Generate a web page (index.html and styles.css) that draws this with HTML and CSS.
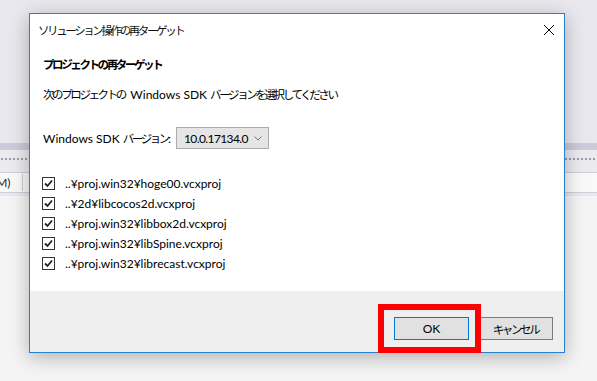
FILE: index.html
```html
<!DOCTYPE html>
<html lang="ja">
<head>
  <meta charset="UTF-8">
  <title>ソリューション操作の再ターゲット</title>
  <link rel="stylesheet" href="styles.css">
</head>
<body>
  <!-- IDE behind the dialog -->
  <div class="ide">
    <div class="ide-top"></div>
    <div class="ide-band"></div>
    <div class="ide-grip"></div>
    <div class="ide-bar">
      <span class="ide-menu">(M)</span>
      <span class="ide-sep"></span>
    </div>
    <div class="ide-under"></div>
    <div class="ide-rest"></div>
  </div>

  <div class="dialog">
    <div class="titlebar">
      <span class="title ja">ソリューション操作の再ターゲット</span>
      <svg class="close" width="12" height="12" viewBox="0 0 12 12">
        <path d="M1 1 L11 11 M11 1 L1 11" stroke="#000" stroke-width="1"/>
      </svg>
    </div>

    <div class="content">
      <h2 class="heading ja">プロジェクトの再ターゲット</h2>
      <p class="lead"><span class="ja">次のプロジェクトの</span> Windows SDK <span class="ja">バージョンを選択してください</span></p>

      <div class="sdk-row">
        <span class="sdk-label">Windows SDK <span class="ja">バージョン</span>:</span>
        <div class="select">
          <span class="value">10.0.17134.0</span>
          <svg class="chev" width="8" height="5" viewBox="0 0 8 5">
            <path d="M0.5 0.5 L4 4 L7.5 0.5" fill="none" stroke="#777" stroke-width="1"/>
          </svg>
        </div>
      </div>

      <ul class="projects">
        <li><span class="check"></span>..¥proj.win32¥hoge00.vcxproj</li>
        <li><span class="check"></span>..¥2d¥libcocos2d.vcxproj</li>
        <li><span class="check"></span>..¥proj.win32¥libbox2d.vcxproj</li>
        <li><span class="check"></span>..¥proj.win32¥libSpine.vcxproj</li>
        <li><span class="check"></span>..¥proj.win32¥librecast.vcxproj</li>
      </ul>
    </div>

    <div class="footer">
      <button class="btn btn-ok">OK</button>
      <button class="btn"><span class="ja">キャンセル</span></button>
    </div>
  </div>

  <div class="highlight"></div>
</body>
</html>
```

FILE: styles.css
```css
body {
  margin: 0;
  width: 597px;
  height: 381px;
  overflow: hidden;
  font-family: Lato, "Noto Sans CJK JP", sans-serif;
  font-size: 12px;
  color: #000;
  background-color: #f4f4f4;
  position: relative;
}

/* japanese runs: Yu Gothic UI kana are narrow, squeeze Noto a bit */
.ja {
  font-family: "Noto Sans CJK JP", sans-serif;
  font-size: 11.5px;
  letter-spacing: -2.4px;
}

.lead .ja:first-child {
  margin-right: 2.4px;
}

/* background IDE */
.ide-top {
  height: 143px;
  background: #e8e8ee;
}

.ide-band {
  height: 7px;
  background: #cbcbd9;
}

.ide-grip {
  height: 23px;
  background-color: #eaeaef;
  background-image: radial-gradient(#9a9aa6 0.8px, transparent 1px);
  background-size: 4px 4px;
  background-position: 0 7px;
  background-repeat: repeat-x;
  border-bottom: 1px solid #cfcfd8;
  box-sizing: border-box;
}

.ide-bar {
  height: 19px;
  background: #f9f9f9;
  border-bottom: 1px solid #cfcfd8;
  display: flex;
  align-items: center;
  color: #1e1e1e;
}

.ide-menu {
  margin-left: -7px;
}

.ide-sep {
  width: 1px;
  height: 17px;
  background: #ccc;
  margin-left: 11px;
}

.ide-under {
  height: 3px;
  background: #e8e8ee;
}

.ide-rest {
  height: 190px;
  background: #f4f4f4;
}

/* dialog window */
.dialog {
  position: absolute;
  left: 29px;
  top: 13px;
  width: 534px;
  border: 1px solid #2b7fd0;
  background: #fff;
  box-shadow: 0 4px 18px rgba(0, 0, 0, 0.28);
}

.titlebar {
  height: 31px;
  display: flex;
  align-items: center;
  justify-content: space-between;
  padding: 0 9px 0 8px;
}

.title {
  color: #111;
}

.content {
  padding: 11px 13px 18px;
}

.heading {
  margin: 0;
  font-weight: bold;
  line-height: 16px;
}

.lead {
  margin: 14px 0 0;
  line-height: 16px;
}

.sdk-row {
  margin-top: 24px;
  display: flex;
  align-items: center;
  gap: 5px;
}

.select {
  width: 78px;
  height: 20px;
  border: 1px solid #acacac;
  background: #e5e5e5;
  display: flex;
  align-items: center;
  justify-content: space-between;
  padding: 0 6px 0 7px;
}

.value {
  letter-spacing: -0.6px;
}

.chev {
  margin-top: 1px;
}

.projects {
  list-style: none;
  margin: 24px 0 0;
  padding: 0;
}

.projects li {
  height: 20px;
  display: flex;
  align-items: center;
}

.check {
  width: 11px;
  height: 11px;
  border: 1px solid #333;
  margin: 0 10px 0 -1px;
  background: #fff url("data:image/svg+xml;utf8,<svg xmlns='http://www.w3.org/2000/svg' width='11' height='11'><path d='M2 5.5 L4.5 8 L9 2.5' fill='none' stroke='%23222' stroke-width='1.8'/></svg>") no-repeat center;
}

.footer {
  height: 61px;
  background: #efefef;
  display: flex;
  justify-content: flex-end;
  align-items: flex-start;
  gap: 9px;
  padding: 26px 11px 0 0;
  box-sizing: border-box;
}

.btn {
  width: 75px;
  height: 23px;
  background: #e1e1e1;
  border: 1px solid #7a7a7a;
  font: inherit;
  color: #000;
  padding: 0;
}

.btn-ok {
  border-color: #0078d7;
}

/* red annotation box */
.highlight {
  position: absolute;
  left: 378px;
  top: 304px;
  width: 91px;
  height: 37px;
  border: 6px solid #ff0000;
}
```
